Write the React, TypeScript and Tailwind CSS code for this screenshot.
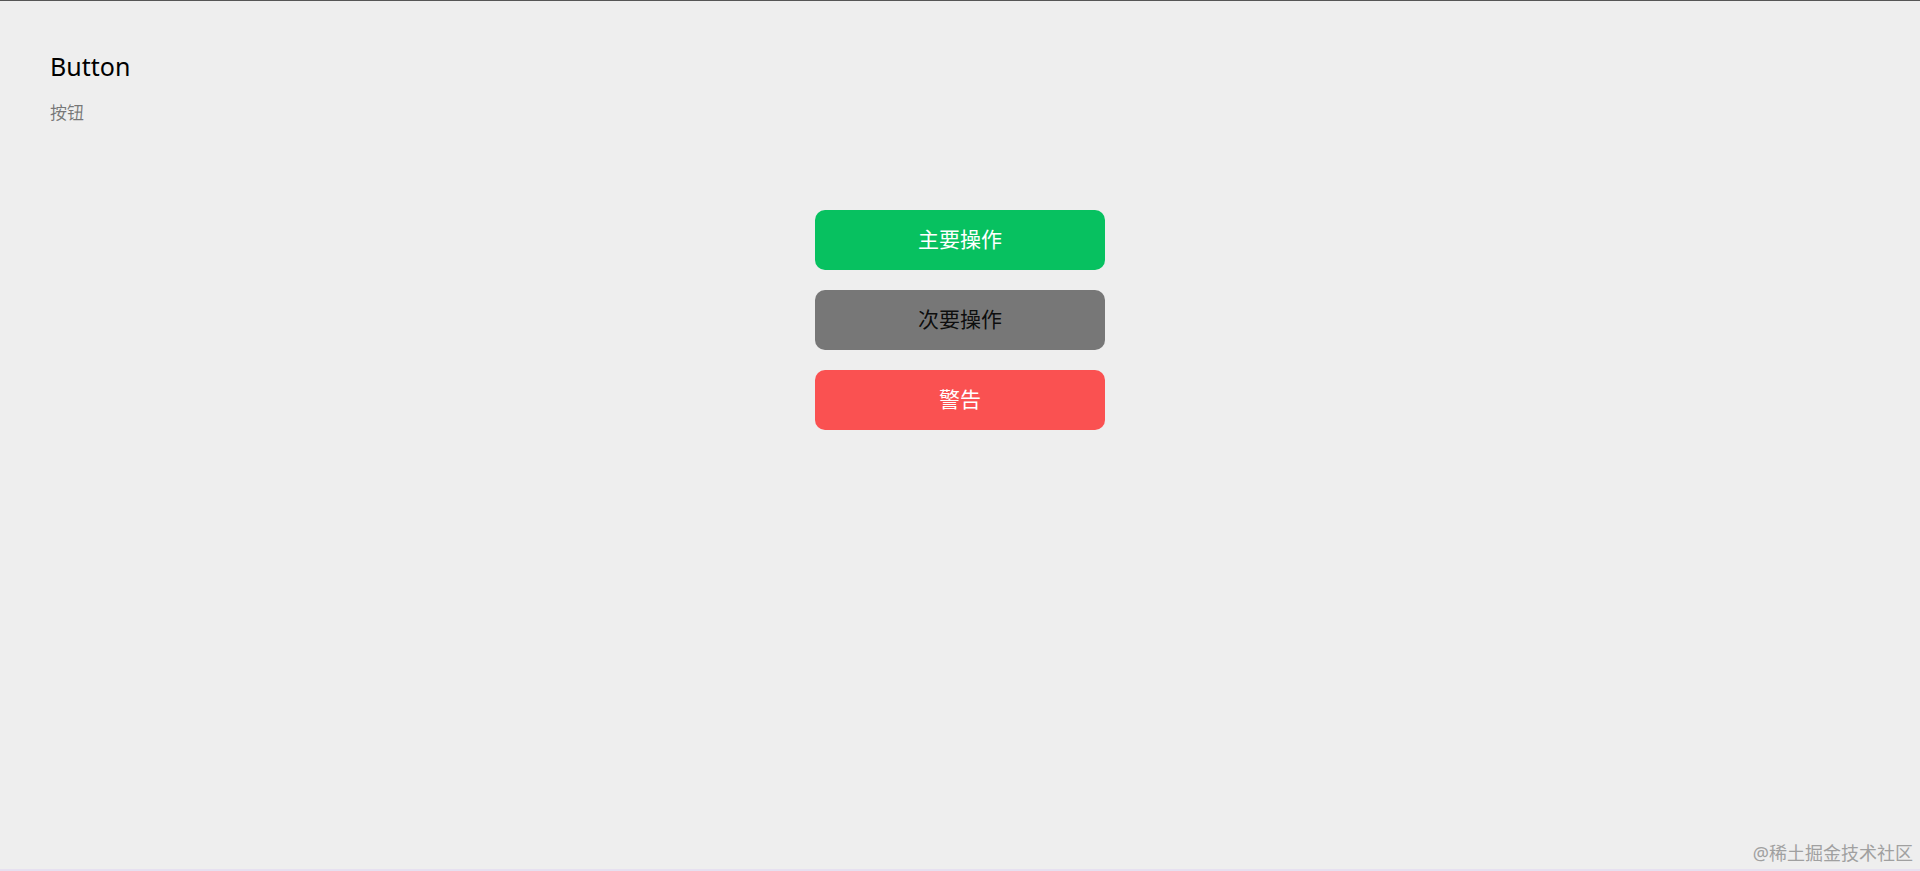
import React from "react";

export default function App() {
  const cjk = '"Noto Sans", "Noto Sans CJK SC", sans-serif';
  return (
    <div
      className="min-h-[871px] bg-[#eeeeee] border-t border-[#555555] border-b-2 border-b-[#e6e0f0] flex flex-col"
      style={{ fontFamily: cjk }}
    >
      <div className="pt-[48px] pl-[50px]">
        <h1 className="text-[25px] leading-[34px] text-black font-normal">Button</h1>
        <p className="mt-[18px] text-[17px] leading-[24px] text-[rgba(0,0,0,0.5)]">按钮</p>
      </div>
      <div className="mt-[85px] flex flex-col items-center gap-[20px]">
        <button className="w-[290px] h-[60px] rounded-[10px] bg-[#07c160] text-white text-[21px]">
          主要操作
        </button>
        <button className="w-[290px] h-[60px] rounded-[10px] bg-[#777777] text-[rgba(0,0,0,0.9)] text-[21px]">
          次要操作
        </button>
        <button className="w-[290px] h-[60px] rounded-[10px] bg-[#fa5151] text-white text-[21px]">
          警告
        </button>
      </div>
      <div className="flex-1" />
      <div className="flex justify-end pr-[7px] pb-[6px]">
        <span className="text-[18px] leading-[20px] text-[#a0a0a0]">@稀土掘金技术社区</span>
      </div>
    </div>
  );
}
